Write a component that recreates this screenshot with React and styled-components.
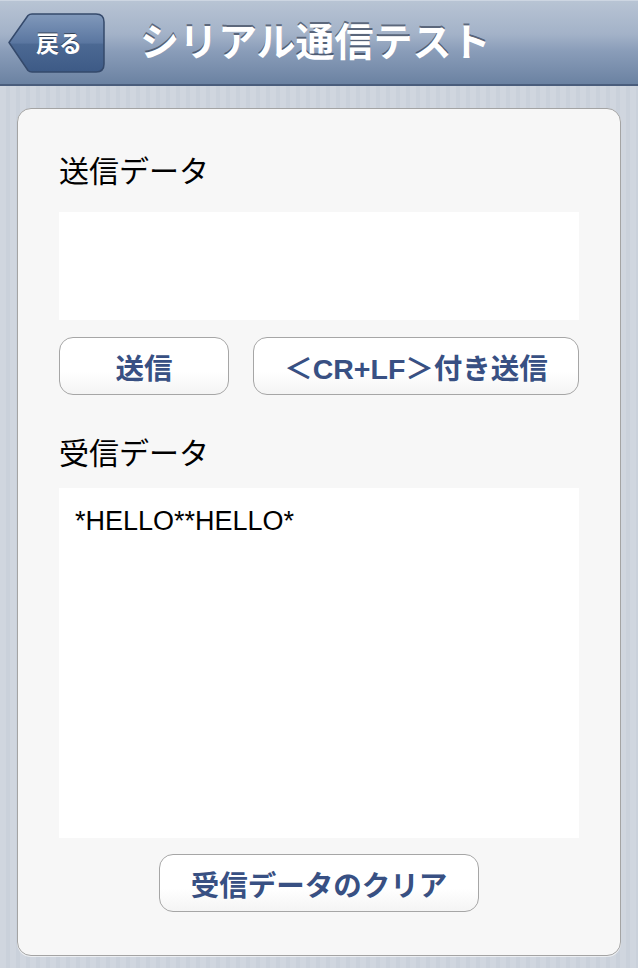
import React from "react";
import styled, { createGlobalStyle } from "styled-components";

const Global = createGlobalStyle`
  html, body { margin: 0; padding: 0; }
  body {
    width: 638px;
    height: 968px;
    overflow: hidden;
    font-family: "Liberation Sans", "Noto Sans CJK JP", sans-serif;
  }
`;

const Screen = styled.div`
  width: 638px;
  height: 968px;
  display: flex;
  flex-direction: column;
  background: repeating-linear-gradient(
    90deg,
    #d0d6df 0px,
    #d0d6df 6px,
    #cad1db 6px,
    #cad1db 10px
  );
`;

const NavBar = styled.header`
  height: 86px;
  flex: none;
  display: flex;
  align-items: center;
  gap: 35px;
  padding-left: 8px;
  box-sizing: border-box;
  background: linear-gradient(180deg, #b8c4d4 0%, #a3b2c8 40%, #8a9db9 60%, #6b82a2 100%);
  border-top: 1px solid #cdd6e2;
  border-bottom: 2px solid #4a5d7c;
`;

const BackButton = styled.button`
  position: relative;
  width: 97px;
  height: 60px;
  border: none;
  padding: 0 0 2px 28px;
  margin-top: 1px;
  background: transparent;
  display: flex;
  align-items: center;
  font-family: "Liberation Sans", "Noto Sans CJK JP", sans-serif;
  font-weight: 700;
  font-size: 23px;
  color: #fff;
  text-shadow: 0 -1px 0 rgba(0, 0, 0, 0.5);
  svg { position: absolute; left: 0; top: 0; }
  span { position: relative; }
`;

const Title = styled.h1`
  margin: 0;
  font-family: "Liberation Sans", "Noto Sans CJK JP", sans-serif;
  font-weight: 700;
  font-size: 39px;
  line-height: 1;
  color: #fff;
  letter-spacing: 0;
  text-shadow: 0 -2px 0 rgba(40, 50, 70, 0.6);
  margin-top: 0;
`;

const Body = styled.main`
  flex: 1;
  padding: 22px 17px 12px 17px;
  display: flex;
  box-sizing: border-box;
`;

const Card = styled.section`
  flex: 1;
  background: #f7f7f7;
  border: 1.5px solid #a4a4a4;
  border-radius: 14px;
  box-shadow: 0 1px 0 rgba(255, 255, 255, 0.6);
  padding: 42px 41px 0 41px;
  display: flex;
  flex-direction: column;
  box-sizing: border-box;
`;

const Label = styled.div`
  font-family: "Noto Sans CJK JP", sans-serif;
  font-size: 30px;
  line-height: 36px;
  color: #000;
  margin-top: ${(p) => p.$mt || 0}px;
`;

const Field = styled.div`
  background: #fff;
  height: ${(p) => p.$h}px;
  margin-top: ${(p) => p.$mt}px;
  box-sizing: border-box;
  padding: 17px 16px;
  font-family: "Liberation Sans", sans-serif;
  font-size: 27px;
  line-height: 32px;
  color: #000;
`;

const ButtonRow = styled.div`
  display: flex;
  gap: 24px;
  margin-top: ${(p) => p.$mt || 17}px;
  justify-content: ${(p) => (p.$center ? "center" : "flex-start")};
`;

const Button = styled.button`
  width: ${(p) => p.$w}px;
  height: 58px;
  border: 1.5px solid #a6a6a6;
  border-radius: 14px;
  background: linear-gradient(180deg, #ffffff 0%, #ffffff 60%, #f4f4f4 100%);
  font-family: "Liberation Sans", "Noto Sans CJK JP", sans-serif;
  font-weight: 700;
  font-size: 28.5px;
  color: #385083;
  padding: 0;
  display: flex;
  align-items: center;
  justify-content: center;
  box-sizing: border-box;
`;

function BackShape() {
  return (
    <svg width="97" height="60" viewBox="0 0 97 60">
      <defs>
        <linearGradient id="bk" x1="0" y1="0" x2="0" y2="1">
          <stop offset="0" stopColor="#8199bb" />
          <stop offset="0.5" stopColor="#5a76a0" />
          <stop offset="0.52" stopColor="#4c6993" />
          <stop offset="1" stopColor="#3d5a86" />
        </linearGradient>
      </defs>
      <path
        d="M1 29.5 L20 2.5 Q21.5 1 24 1 L88 1 Q96 1 96 9 L96 51 Q96 59 88 59 L24 59 Q21.5 59 20 57.5 Z"
        fill="url(#bk)"
        stroke="#34496b"
        strokeWidth="1.5"
        strokeLinejoin="round"
      />
    </svg>
  );
}

export default function App() {
  return (
    <>
      <Global />
      <Screen>
        <NavBar>
          <BackButton>
            <BackShape />
            <span>戻る</span>
          </BackButton>
          <Title>シリアル通信テスト</Title>
        </NavBar>
        <Body>
          <Card>
            <Label>送信データ</Label>
            <Field $h={108} $mt={25} />
            <ButtonRow>
              <Button $w={170}>送信</Button>
              <Button $w={326}>＜CR+LF＞付き送信</Button>
            </ButtonRow>
            <Label $mt={38}>受信データ</Label>
            <Field $h={350} $mt={19}>*HELLO**HELLO*</Field>
            <ButtonRow $center $mt={16}>
              <Button $w={320}>受信データのクリア</Button>
            </ButtonRow>
          </Card>
        </Body>
      </Screen>
    </>
  );
}
